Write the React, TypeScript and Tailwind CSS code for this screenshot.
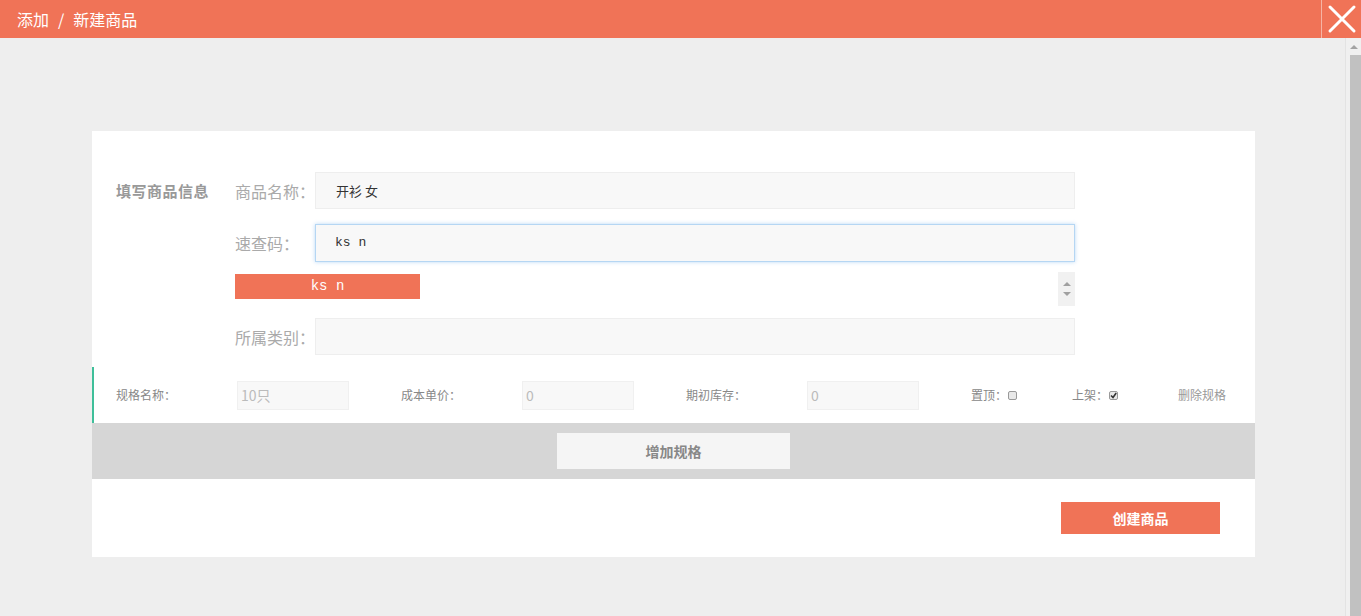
import React from 'react';

const cjk = { fontFamily: '"Noto Sans CJK SC", "Noto Sans", sans-serif' };
const mono = { fontFamily: '"Liberation Mono", "Noto Sans CJK SC", monospace' };

function FieldRow({ label, value, focused }: { label: string; value?: string; focused?: boolean }) {
  return (
    <div className="flex items-center">
      <div className="w-[80px] text-[16px] text-[#aaaaaa]">{label}</div>
      <div
        className={
          focused
            ? 'flex h-[38px] w-[760px] items-center border border-[#b5d6f3] bg-[#f8f8f8] pl-[19px] text-[13px] text-[#333] shadow-[0_0_4px_rgba(102,170,238,0.45)]'
            : 'flex h-[37px] w-[760px] items-center border border-[#eeeeee] bg-[#f8f8f8] pl-[20px] text-[13px] text-[#333]'
        }
        style={focused ? mono : undefined}
      >
        {value}
      </div>
    </div>
  );
}

function SpecField({ label, value }: { label: string; value: string }) {
  return (
    <div className="flex w-[285px] items-center">
      <div className="w-[121px] text-[12px] text-[#888]">{label}</div>
      <div className="flex h-[29px] w-[112px] items-center border border-[#f0f0f0] bg-[#f8f8f8] pl-[3px] text-[14px] text-[#bbb]">
        {value}
      </div>
    </div>
  );
}

function Check({ checked }: { checked?: boolean }) {
  return (
    <span className="ml-[1px] flex h-[9px] w-[9px] items-center justify-center rounded-[2px] border border-[#999] bg-[#e8e8e8]">
      {checked && (
        <svg width="7" height="7" viewBox="0 0 7 7">
          <path d="M1 3.5 L3 5.5 L6.2 1" stroke="#333" strokeWidth="1.6" fill="none" />
        </svg>
      )}
    </span>
  );
}

export default function App() {
  return (
    <div className="flex h-[616px] w-[1361px] flex-col overflow-hidden bg-[#eeeeee]" style={cjk}>
      {/* top bar */}
      <div className="flex h-[38px] shrink-0 items-stretch bg-[#f07357]">
        <div className="flex flex-1 items-center pl-[17px] text-[16px] text-white">
          添加<span className="mx-[9px]">/</span>新建商品
        </div>
        <div className="w-px bg-[#f6b4a4]" />
        <div className="flex w-[39px] items-center justify-center">
          <svg width="30" height="30" viewBox="0 0 30 30">
            <path d="M3 3 L27 27 M27 3 L3 27" stroke="#fff" strokeWidth="3" strokeLinecap="round" />
          </svg>
        </div>
      </div>

      <div className="flex flex-1">
        <div className="flex-1 pl-[92px] pt-[93px]">
          <div className="w-[1163px] bg-white">
            {/* basic info */}
            <div className="flex pt-[41px] pb-[12px]">
              <div className="w-[143px] pl-[24px] pt-[8px] text-[15px] font-bold tracking-[0.5px] text-[#999]">
                填写商品信息
              </div>
              <div className="flex flex-col">
                <FieldRow label="商品名称：" value="开衫 女" />
                <div className="h-[15px]" />
                <FieldRow label="速查码：" value="ks n" focused />
                <div className="flex h-[56px] items-start justify-between">
                  <div
                    className="mt-[12px] flex h-[25px] w-[185px] items-center justify-center bg-[#f07357] text-[14px] text-white"
                    style={mono}
                  >
                    ks n
                  </div>
                  <div className="mt-[10px] flex h-[34px] w-[17px] flex-col items-center justify-center gap-[6px] bg-[#f1f1f1]">
                    <span className="h-0 w-0 border-x-[4px] border-b-[4px] border-x-transparent border-b-[#a0a0a0]" />
                    <span className="h-0 w-0 border-x-[4px] border-t-[4px] border-x-transparent border-t-[#a0a0a0]" />
                  </div>
                </div>
                <FieldRow label="所属类别：" />
              </div>
            </div>

            {/* spec row */}
            <div className="flex h-[56px] items-center border-l-2 border-[#3fbf9a] pl-[22px]">
              <SpecField label="规格名称：" value="10只" />
              <SpecField label="成本单价：" value="0" />
              <SpecField label="期初库存：" value="0" />
              <div className="flex w-[101px] items-center text-[12px] text-[#888]">
                置顶：<Check />
              </div>
              <div className="flex w-[106px] items-center text-[12px] text-[#888]">
                上架：<Check checked />
              </div>
              <div className="text-[12px] text-[#999]">删除规格</div>
            </div>

            {/* add spec */}
            <div className="flex h-[56px] items-center justify-center bg-[#d6d6d6]">
              <div className="flex h-[36px] w-[233px] items-center justify-center bg-[#f5f5f5] text-[14px] font-bold text-[#888]">
                增加规格
              </div>
            </div>

            {/* submit */}
            <div className="flex justify-end pt-[23px] pb-[23px] pr-[35px]">
              <div className="flex h-[32px] w-[159px] items-center justify-center bg-[#f07357] text-[14px] font-bold text-white">
                创建商品
              </div>
            </div>
          </div>
        </div>

        {/* scrollbar */}
        <div className="flex w-[16px] flex-col border-l border-[#e3e3e3] bg-[#f0f0f0]">
          <div className="flex h-[17px] items-center justify-center">
            <span className="h-0 w-0 border-x-[4px] border-b-[4px] border-x-transparent border-b-[#a3a3a3]" />
          </div>
          <div className="ml-auto w-[11px] flex-1 bg-[#c1c1c1]" />
        </div>
      </div>
    </div>
  );
}
